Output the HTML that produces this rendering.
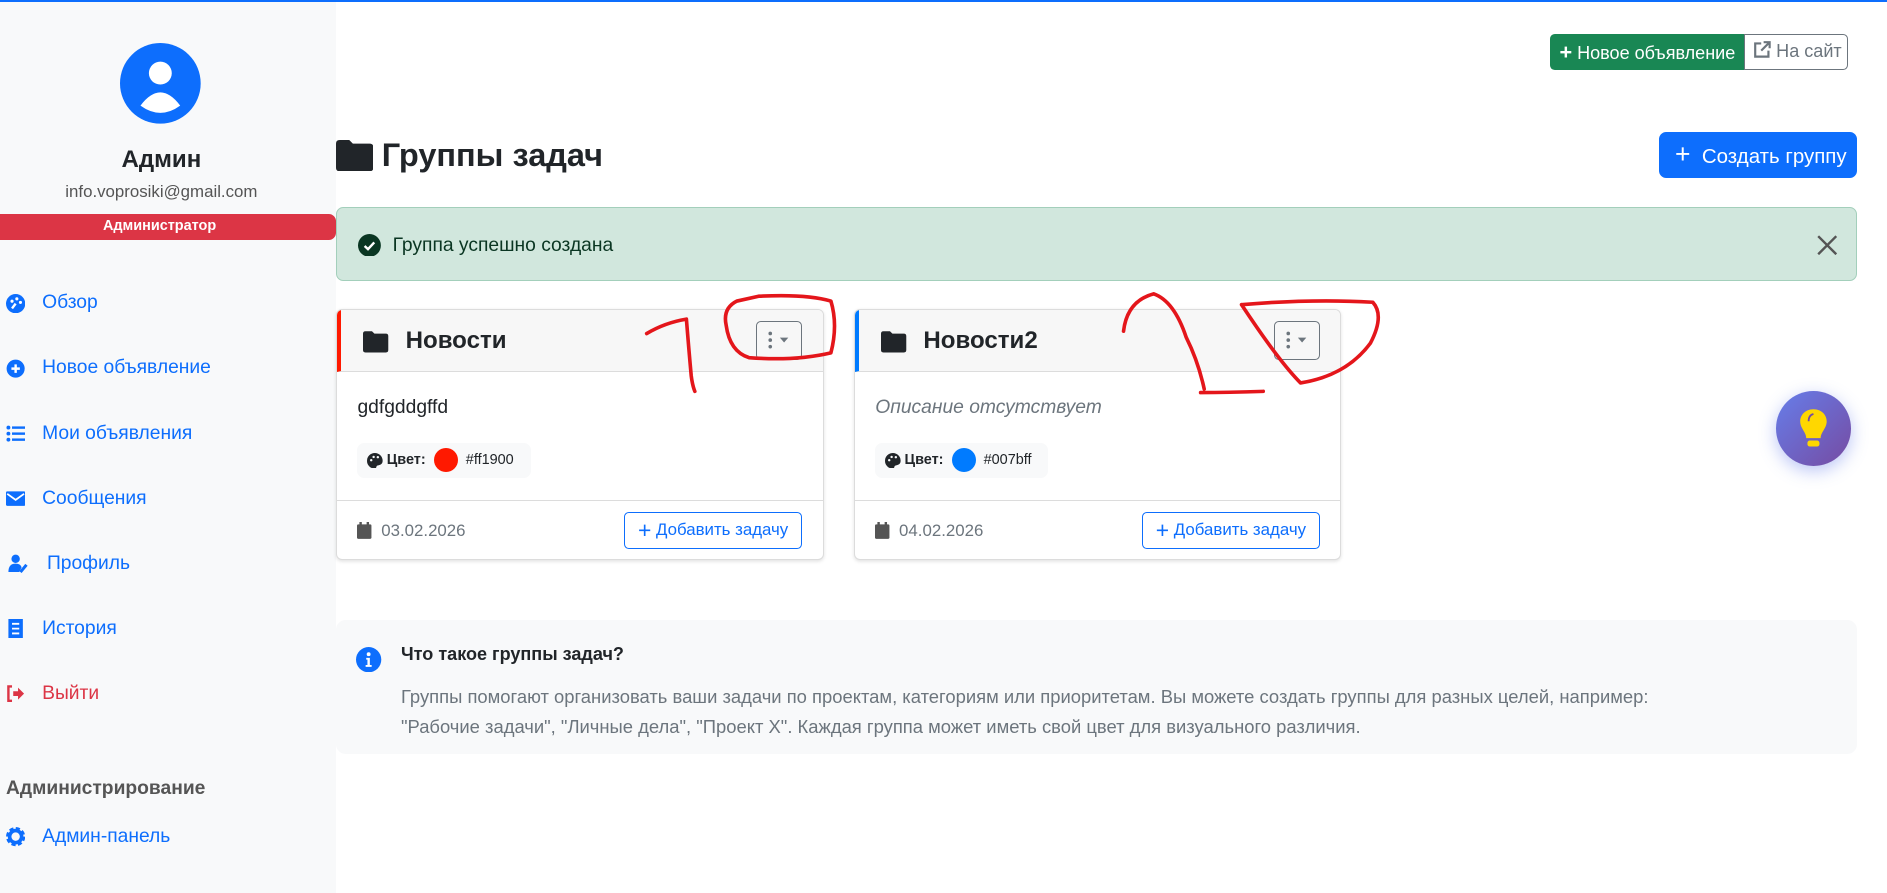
<!DOCTYPE html>
<html><head><meta charset="utf-8"><style>
*{box-sizing:border-box;margin:0;padding:0}
html,body{width:1887px;height:893px;overflow:hidden;background:#fff}
#w{zoom:1.20421;width:1567px;height:742px;position:relative;font-family:"Liberation Sans","DejaVu Sans",sans-serif;color:#212529}
.a{position:absolute}
.side{left:0;top:0;width:279px;height:742px;background:#f8f9fa}
.topline{left:0;top:0;width:1567px;height:2px;background:#0d6efd;z-index:5}
.nav{left:5px;font-size:16px;color:#0d6efd;display:flex;align-items:center;height:20px}
.nav svg{width:16px;height:16px;margin-right:14px}
.card{background:#fff;border:1px solid #dcdcdc;border-radius:5px;box-shadow:0 1px 3px rgba(0,0,0,.12);overflow:hidden}
.ch{position:absolute;left:0;top:0;right:0;height:51px;background:#f7f7f7;border-bottom:1px solid #dcdcdc}
.dd{position:absolute;width:38px;height:32px;border:1px solid #6c757d;border-radius:4px;top:9px;right:17px}
.chip{position:absolute;left:17px;top:110px;height:29px;background:#f8f9fa;border-radius:6px;display:flex;align-items:center;padding:0 14px 0 8px;font-size:12px}
.btnb{position:absolute;right:17px;top:167px;height:31px;width:148px;border:1px solid #0d6efd;border-radius:4px;color:#0d6efd;font-size:14px;display:flex;align-items:center;justify-content:center}
</style></head><body><div id="w">
<div class="a topline"></div>
<div class="a side"></div>
<svg class="a" style="left:100px;top:36px" width="67" height="67" viewBox="0 0 67 67"><circle cx="33.5" cy="33.5" r="33.5" fill="#0d6efd"/><circle cx="33.5" cy="25" r="9.5" fill="#fff"/><path d="M17 52 Q33.5 30 50 52 Q33.5 64 17 52Z" fill="#fff"/></svg>
<div class="a" style="left:0;width:268px;top:121px;text-align:center;font-size:20px;font-weight:bold">Админ</div>
<div class="a" style="left:0;width:268px;top:151px;text-align:center;font-size:14px;color:#555">info.voprosiki@gmail.com</div>
<div class="a" style="left:0;top:178px;width:279px;height:21px;background:#dc3545;border-radius:0 6px 6px 0;color:#fff;font-weight:bold;font-size:12px;text-align:center;line-height:21px;padding-right:14px">Администратор</div>
<div class="a nav" style="top:242px"><svg viewBox="0 0 16 16"><circle cx="8" cy="8" r="8" fill="#0d6efd"/><path d="M8 8 L5 12" stroke="#fff" stroke-width="2"/><circle cx="5" cy="6" r="1.3" fill="#fff"/><circle cx="9" cy="4" r="1.3" fill="#fff"/><circle cx="12" cy="7" r="1.3" fill="#fff"/></svg>Обзор</div>
<div class="a nav" style="top:296px"><svg viewBox="0 0 16 16"><circle cx="8" cy="8" r="7.5" fill="#0d6efd"/><path d="M8 4.5v7M4.5 8h7" stroke="#fff" stroke-width="2"/></svg>Новое объявление</div>
<div class="a nav" style="top:350px"><svg viewBox="0 0 16 16" fill="#0d6efd"><circle cx="2" cy="3" r="1.6"/><circle cx="2" cy="8" r="1.6"/><circle cx="2" cy="13" r="1.6"/><rect x="5" y="2" width="11" height="2"/><rect x="5" y="7" width="11" height="2"/><rect x="5" y="12" width="11" height="2"/></svg>Мои объявления</div>
<div class="a nav" style="top:404px"><svg viewBox="0 0 16 16"><rect x="0" y="2" width="16" height="12" rx="1" fill="#0d6efd"/><path d="M1 4 L8 9 L15 4" stroke="#fff" stroke-width="1.5" fill="none"/></svg>Сообщения</div>
<div class="a nav" style="top:458px"><svg viewBox="0 0 16 16" style="width:20px;margin-right:14px"><circle cx="6" cy="4" r="3.5" fill="#0d6efd"/><path d="M0 15 Q0 8 6 8 Q10 8 11 11 L9 15Z" fill="#0d6efd"/><path d="M10 15 L15 9" stroke="#0d6efd" stroke-width="2.5"/></svg>Профиль</div>
<div class="a nav" style="top:512px"><svg viewBox="0 0 16 16"><rect x="2" y="0" width="12" height="16" fill="#0d6efd"/><path d="M5 4h6M5 8h6M5 12h6" stroke="#fff" stroke-width="1.5"/></svg>История</div>
<div class="a nav" style="top:566px;color:#dc3545"><svg viewBox="0 0 16 16"><path d="M5 2H2v12h3" stroke="#dc3545" stroke-width="2" fill="none"/><path d="M6 6h4V3l5 5-5 5v-3H6Z" fill="#dc3545"/></svg>Выйти</div>
<div class="a" style="left:5px;top:646px;font-size:16px;font-weight:bold;color:#555">Администрирование</div>
<div class="a nav" style="top:685px"><svg viewBox="0 0 16 16"><circle cx="8" cy="8" r="6" fill="none" stroke="#0d6efd" stroke-width="4" stroke-dasharray="3 1.7"/><circle cx="8" cy="8" r="5" fill="none" stroke="#0d6efd" stroke-width="3"/></svg>Админ-панель</div>

<div class="a" style="left:1287px;top:28px;width:161px;height:30px;background:#198754;border-radius:4px 0 0 4px;color:#fff;font-size:15px;line-height:30px;padding-left:8px"><b style="font-size:18px">+</b> Новое объявление</div>
<div class="a" style="left:1448px;top:28px;width:87px;height:30px;border:1px solid #6c757d;border-radius:0 4px 4px 0;color:#6c757d;font-size:15px;line-height:28px;padding-left:8px"><svg width="14" height="14" viewBox="0 0 14 14" style="vertical-align:-1px"><path d="M6 2H1v11h11V8" stroke="#6c757d" stroke-width="1.8" fill="none"/><path d="M6 8 L13 1M8 1h5v5" stroke="#6c757d" stroke-width="1.8" fill="none"/></svg> На сайт</div>

<svg class="a" style="left:279px;top:116px" width="31" height="26" viewBox="0 0 31 26"><path d="M0 3 Q0 0 3 0H11L14 3H28Q31 3 31 6V23Q31 26 28 26H3Q0 26 0 23Z" fill="#212529"/></svg>
<div class="a" style="left:317px;top:114px;font-size:27px;font-weight:bold">Группы задач</div>
<div class="a" style="left:1378px;top:110px;width:164px;height:38px;background:#0d6efd;border-radius:6px;color:#fff;font-size:17px;line-height:38px;padding-left:13px"><b style="font-size:22px;font-weight:normal">+</b>&nbsp; Создать группу</div>

<div class="a" style="left:279px;top:172px;width:1263px;height:61px;background:#d1e7dd;border:1px solid #a3cfbb;border-radius:6px"></div>
<svg class="a" style="left:297px;top:194px" width="19" height="19" viewBox="0 0 19 19"><circle cx="9.5" cy="9.5" r="9.5" fill="#0a3622"/><path d="M5.5 10 L8.3 12.6 L13.5 7" stroke="#fff" stroke-width="2" fill="none"/></svg>
<div class="a" style="left:326px;top:195px;font-size:16px;color:#0a3622">Группа успешно создана</div>
<svg class="a" style="left:1509px;top:195px" width="17" height="17" viewBox="0 0 17 17"><path d="M1 1L16 16M16 1L1 16" stroke="#555" stroke-width="2"/></svg>

<!-- card1 -->
<div class="a card" style="left:279px;top:257px;width:405px;height:208px">
 <div class="ch" style="border-left:4px solid #ff1900"></div>
 <svg class="a" style="left:22px;top:17px" width="21" height="18" viewBox="0 0 31 26"><path d="M0 3 Q0 0 3 0H11L14 3H28Q31 3 31 6V23Q31 26 28 26H3Q0 26 0 23Z" fill="#212529"/></svg>
 <div class="a" style="left:57px;top:14px;font-size:20px;font-weight:600">Новости</div>
 <div class="dd"><svg width="36" height="30"><circle cx="11" cy="9.5" r="1.5" fill="#6c757d"/><circle cx="11" cy="15" r="1.5" fill="#6c757d"/><circle cx="11" cy="20.5" r="1.5" fill="#6c757d"/><path d="M19 13h7l-3.5 4z" fill="#6c757d"/></svg></div>
 <div class="a" style="left:17px;top:72px;font-size:16px">gdfgddgffd</div>
 <div class="chip"><svg width="13" height="13" viewBox="0 0 13 13"><path d="M6.5 0a6.5 6.5 0 1 0 0 13c1.5 0 1-2 2-2.5S13 10 13 6.5A6.5 6.5 0 0 0 6.5 0Z" fill="#212529"/><circle cx="3.5" cy="6" r="1" fill="#f8f9fa"/><circle cx="5.5" cy="3.3" r="1" fill="#f8f9fa"/><circle cx="9" cy="3.5" r="1" fill="#f8f9fa"/></svg>&nbsp;<b>Цвет:</b>&nbsp;&nbsp;<span style="display:inline-block;width:20px;height:20px;border-radius:50%;background:#ff1900"></span>&nbsp;&nbsp;#ff1900</div>
 <div class="a" style="left:0;right:0;top:157px;border-top:1px solid #dcdcdc"></div>
 <div class="a" style="left:17px;top:175px;font-size:14px;color:#6c757d"><svg width="12" height="14" viewBox="0 0 12 14" style="vertical-align:-2px"><rect x="0" y="2" width="12" height="12" rx="1" fill="#555"/><rect x="2" y="0" width="2" height="3" fill="#555"/><rect x="8" y="0" width="2" height="3" fill="#555"/></svg>&nbsp; 03.02.2026</div>
 <div class="btnb"><b style="font-size:19px;font-weight:normal">+</b>&nbsp;Добавить задачу</div>
</div>
<!-- card2 -->
<div class="a card" style="left:709px;top:257px;width:405px;height:208px">
 <div class="ch" style="border-left:4px solid #007bff"></div>
 <svg class="a" style="left:22px;top:17px" width="21" height="18" viewBox="0 0 31 26"><path d="M0 3 Q0 0 3 0H11L14 3H28Q31 3 31 6V23Q31 26 28 26H3Q0 26 0 23Z" fill="#212529"/></svg>
 <div class="a" style="left:57px;top:14px;font-size:20px;font-weight:600">Новости2</div>
 <div class="dd"><svg width="36" height="30"><circle cx="11" cy="9.5" r="1.5" fill="#6c757d"/><circle cx="11" cy="15" r="1.5" fill="#6c757d"/><circle cx="11" cy="20.5" r="1.5" fill="#6c757d"/><path d="M19 13h7l-3.5 4z" fill="#6c757d"/></svg></div>
 <div class="a" style="left:17px;top:72px;font-size:16px;font-style:italic;color:#6c757d">Описание отсутствует</div>
 <div class="chip"><svg width="13" height="13" viewBox="0 0 13 13"><path d="M6.5 0a6.5 6.5 0 1 0 0 13c1.5 0 1-2 2-2.5S13 10 13 6.5A6.5 6.5 0 0 0 6.5 0Z" fill="#212529"/><circle cx="3.5" cy="6" r="1" fill="#f8f9fa"/><circle cx="5.5" cy="3.3" r="1" fill="#f8f9fa"/><circle cx="9" cy="3.5" r="1" fill="#f8f9fa"/></svg>&nbsp;<b>Цвет:</b>&nbsp;&nbsp;<span style="display:inline-block;width:20px;height:20px;border-radius:50%;background:#007bff"></span>&nbsp;&nbsp;#007bff</div>
 <div class="a" style="left:0;right:0;top:157px;border-top:1px solid #dcdcdc"></div>
 <div class="a" style="left:17px;top:175px;font-size:14px;color:#6c757d"><svg width="12" height="14" viewBox="0 0 12 14" style="vertical-align:-2px"><rect x="0" y="2" width="12" height="12" rx="1" fill="#555"/><rect x="2" y="0" width="2" height="3" fill="#555"/><rect x="8" y="0" width="2" height="3" fill="#555"/></svg>&nbsp; 04.02.2026</div>
 <div class="btnb"><b style="font-size:19px;font-weight:normal">+</b>&nbsp;Добавить задачу</div>
</div>

<div class="a" style="left:1475px;top:325px;width:62px;height:62px;border-radius:50%;background:linear-gradient(135deg,#667eea,#764ba2);box-shadow:0 4px 14px rgba(102,126,234,.45)"></div>
<svg class="a" style="left:1494px;top:339px" width="24" height="34" viewBox="0 0 24 34"><path d="M12 1C5 1 1 6 1 11c0 6 5 9 5 14h12c0-5 5-8 5-14C23 6 19 1 12 1Z" fill="#ffd700"/><rect x="7" y="27" width="10" height="5" rx="2" fill="#ffd700"/><path d="M8 11Q8 6 12 5" stroke="#764ba2" stroke-width="1.5" fill="none"/></svg>

<div class="a" style="left:279px;top:515px;width:1263px;height:111px;background:#f8f9fa;border-radius:8px"></div>
<svg class="a" style="left:296px;top:537px" width="21" height="21" viewBox="0 0 21 21"><circle cx="10.5" cy="10.5" r="10.5" fill="#0d6efd"/><circle cx="10.5" cy="6" r="1.6" fill="#fff"/><path d="M8.5 9h3v6h1.5v1.5h-5V15h1.5v-4.5h-1z" fill="#fff"/></svg>
<div class="a" style="left:333px;top:535px;font-size:15px;font-weight:bold">Что такое группы задач?</div>
<div class="a" style="left:333px;top:566px;font-size:15.3px;color:#6c757d;line-height:25px;width:1200px">Группы помогают организовать ваши задачи по проектам, категориям или приоритетам. Вы можете создать группы для разных целей, например:<br>"Рабочие задачи", "Личные дела", "Проект X". Каждая группа может иметь свой цвет для визуального различия.</div>

<svg class="a" style="left:0;top:0;z-index:10" width="1567" height="742" fill="none" stroke="#e4161b" stroke-width="3" stroke-linecap="round" stroke-linejoin="round">
<path d="M537 277 Q552 268 570 265 Q572 290 574 312 Q575 320 577 325"/>
<path d="M612 250 Q600 256 603 270 Q606 292 622 297 Q660 300 690 293 Q696 270 690 250 Q670 244 630 246 L612 250"/>
<path d="M933 275 Q936 250 958 244 Q975 250 985 280 Q995 300 1000 323 M997 326 Q1020 326 1049 325"/>
<path d="M1031 253 Q1090 248 1140 251 Q1150 262 1138 285 Q1118 312 1080 318 Q1062 300 1031 253"/>
</svg>
</div></body></html>
